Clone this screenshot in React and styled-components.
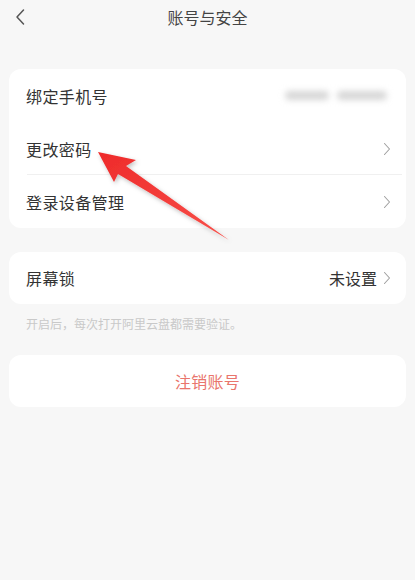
import React from "react"
import styled, { createGlobalStyle } from "styled-components"

const GlobalStyle = createGlobalStyle`
  html, body {
    margin: 0;
    padding: 0;
    background: #f7f7f7;
  }
  body {
    font-family: "Noto Sans CJK SC", "Noto Sans", sans-serif;
  }
`

const Page = styled.div`
  position: relative;
  width: 415px;
  height: 580px;
  background: #f7f7f7;
  overflow: hidden;
`

const TopBar = styled.header`
  height: 33px;
  display: flex;
  align-items: center;
  justify-content: center;
  position: relative;
`

const Back = styled.button`
  position: absolute;
  left: 10px;
  top: 7px;
  width: 20px;
  height: 20px;
  padding: 0;
  border: 0;
  background: none;
  display: flex;
  align-items: center;
  justify-content: center;
`

const Title = styled.h1`
  margin: 0;
  font-size: 16px;
  font-weight: 400;
  color: #444;
  line-height: 1;
`

const Content = styled.main`
  padding: 36px 9px 0 9px;
  display: flex;
  flex-direction: column;
`

const Card = styled.section`
  background: #fff;
  border-radius: 12px;
  overflow: hidden;
  margin-bottom: ${p => p.$gap || 0}px;
`

const Row = styled.div`
  height: ${p => p.$h || 53}px;
  display: flex;
  align-items: center;
  padding: 0 15px 0 17px;
  position: relative;
  ${p => p.$divider && `
    &::after {
      content: "";
      position: absolute;
      left: 18px;
      right: 4px;
      bottom: 0;
      height: 1px;
      background: #f0f0f0;
    }
  `}
`

const Label = styled.span`
  flex: 1;
  font-size: 16px;
  color: #333;
  letter-spacing: 0.4px;
`

const Value = styled.span`
  font-size: 16px;
  color: #333;
  margin-right: 6px;
`

const Blurred = styled.span`
  display: flex;
  gap: 8px;
  margin-right: 4px;
  filter: blur(3px);
`

const Blob = styled.span`
  width: ${p => p.$w}px;
  height: 9px;
  border-radius: 5px;
  background: #d6d6d6;
`

const Note = styled.p`
  margin: 11px 0 23px 17px;
  font-size: 12px;
  color: #c9c9c9;
`

const Danger = styled.div`
  height: 52px;
  display: flex;
  align-items: center;
  justify-content: center;
  font-size: 16px;
  color: #e9756c;
  letter-spacing: 0.3px;
`

const Arrow = styled.svg`
  position: absolute;
  left: 0;
  top: 0;
  pointer-events: none;
`

const Chevron = () => (
  <svg width="8" height="14" viewBox="0 0 8 14">
    <path d="M1.5 1.5 L6.5 7 L1.5 12.5" fill="none" stroke="#a0a0a0" strokeWidth="1.1" strokeLinecap="round" strokeLinejoin="round" />
  </svg>
)

export default function App() {
  return (
    <>
      <GlobalStyle />
      <Page>
        <TopBar>
          <Back aria-label="back">
            <svg width="12" height="18" viewBox="0 0 12 18">
              <path d="M9.5 2 L3 9 L9.5 16" fill="none" stroke="#555" strokeWidth="1.5" strokeLinecap="round" strokeLinejoin="round" />
            </svg>
          </Back>
          <Title>账号与安全</Title>
        </TopBar>
        <Content>
          <Card $gap={24}>
            <Row>
              <Label>绑定手机号</Label>
              <Blurred>
                <Blob $w={44} />
                <Blob $w={50} />
              </Blurred>
            </Row>
            <Row $divider>
              <Label>更改密码</Label>
              <Chevron />
            </Row>
            <Row>
              <Label>登录设备管理</Label>
              <Chevron />
            </Row>
          </Card>
          <Card>
            <Row $h={52}>
              <Label>屏幕锁</Label>
              <Value>未设置</Value>
              <Chevron />
            </Row>
          </Card>
          <Note>开启后，每次打开阿里云盘都需要验证。</Note>
          <Card>
            <Danger>注销账号</Danger>
          </Card>
        </Content>
        <Arrow width="415" height="580" viewBox="0 0 415 580">
          <defs>
            <linearGradient id="ar" x1="0" y1="0" x2="1" y2="1">
              <stop offset="0" stopColor="#ee2a2a" />
              <stop offset="1" stopColor="#f8504a" />
            </linearGradient>
            <filter id="sh" x="-20%" y="-20%" width="140%" height="140%">
              <feDropShadow dx="1.5" dy="2" stdDeviation="2" floodColor="#000" floodOpacity="0.25" />
            </filter>
          </defs>
          <polygon
            points="98,152 136,160 126,166 229,240 118,174 114,182"
            fill="url(#ar)"
            filter="url(#sh)"
          />
        </Arrow>
      </Page>
    </>
  )
}
